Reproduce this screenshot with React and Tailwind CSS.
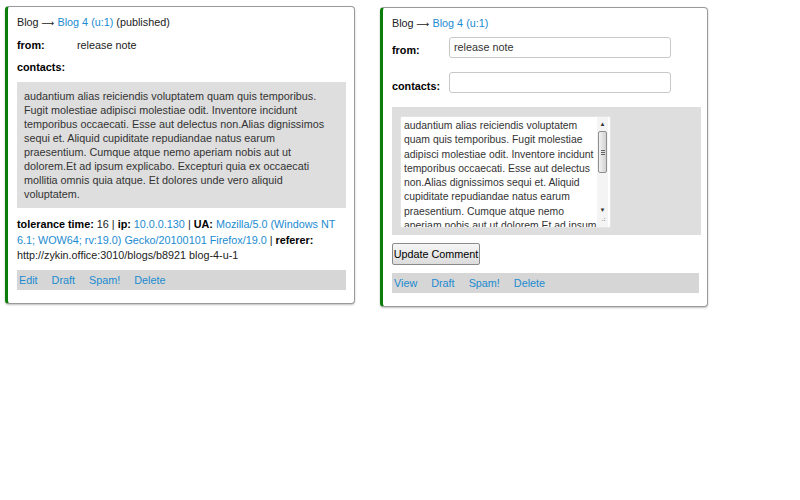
import React from "react";

const body =
  "audantium alias reiciendis voluptatem quam quis temporibus. Fugit molestiae adipisci molestiae odit. Inventore incidunt temporibus occaecati. Esse aut delectus non.Alias dignissimos sequi et. Aliquid cupiditate repudiandae natus earum praesentium. Cumque atque nemo aperiam nobis aut ut dolorem.Et ad ipsum explicabo. Excepturi quia ex occaecati mollitia omnis quia atque. Et dolores unde vero aliquid voluptatem.";

const link = "text-[#1a8bd0] hover:underline cursor-pointer";

const Card = ({ width, children }) => (
  <div
    className={`${width} bg-white border border-[#9a9a9a] border-l-[3px] border-l-[#0a7d0a] rounded-[4px] shadow-[0_1px_2px_rgba(0,0,0,0.25)] pl-[9px] pr-[8px] pt-[8px] pb-[13px]`}
  >
    {children}
  </div>
);

const Actions = ({ items }) => (
  <div className="bg-[#d6d6d6] h-[20px] flex items-center gap-[14px] pl-[2px]">
    {items.map((t) => (
      <span key={t} className={link}>
        {t}
      </span>
    ))}
  </div>
);

const Scrollbar = () => (
  <div className="w-[11px] flex flex-col items-center py-[3px] bg-[#f4f4f4]">
    <div className="text-[6px] leading-[8px] text-[#333]">▲</div>
    <div className="mt-[3px] w-[9px] h-[42px] rounded-[2px] border border-[#8e8e8e] bg-gradient-to-r from-[#f2f2f2] to-[#d2d2d2] flex items-center justify-center">
      <div className="flex flex-col gap-[1px]">
        <div className="w-[4px] h-px bg-[#666]" />
        <div className="w-[4px] h-px bg-[#666]" />
        <div className="w-[4px] h-px bg-[#666]" />
      </div>
    </div>
    <div className="flex-1" />
    <div className="text-[6px] leading-[8px] text-[#333]">▼</div>
    <div className="mt-[2px] text-[7px] leading-[8px] text-[#aaa] tracking-[-1px]">⠠⠆</div>
  </div>
);

export default function App() {
  return (
    <div
      className="min-h-[500px] w-[800px] bg-white text-[10.8px] leading-[14px] text-[#222] pl-[5px] pt-[6px] flex items-start gap-[25px]"
      style={{ fontFamily: '"Liberation Sans", Arial, sans-serif' }}
    >
      <Card width="w-[350px]">
        <div>
          Blog <span className="font-['DejaVu_Sans'] text-[9px]">⟶</span>{" "}
          <span className={link}>Blog 4 (u:1)</span> (published)
        </div>
        <div className="flex mt-[8px]">
          <div className="w-[60px] font-bold text-black">from:</div>
          <div>release note</div>
        </div>
        <div className="mt-[8px] font-bold text-black">contacts:</div>
        <div className="mt-[8px] bg-[#dedede] px-[7px] pt-[7px] pb-[7px] text-[#333]">{body}</div>
        <div className="mt-[9px] leading-[15.5px]">
          <b className="text-black">tolerance time:</b> 16 | <b className="text-black">ip:</b>{" "}
          <span className={link}>10.0.0.130</span> | <b className="text-black">UA:</b>{" "}
          <span className={link}>
            Mozilla/5.0 (Windows NT 6.1; WOW64; rv:19.0) Gecko/20100101 Firefox/19.0
          </span>{" "}
          | <b className="text-black">referer:</b> http://zykin.office:3010/blogs/b8921 blog-4-u-1
        </div>
        <div className="mt-[6px]">
          <Actions items={["Edit", "Draft", "Spam!", "Delete"]} />
        </div>
      </Card>

      <div className="pt-px">
        <Card width="w-[328px]">
          <div>
            Blog <span className="font-['DejaVu_Sans'] text-[9px]">⟶</span>{" "}
            <span className={link}>Blog 4 (u:1)</span>
          </div>
          <div className="flex items-center mt-[6px]">
            <div className="w-[57px] font-bold text-black pt-[5px]">from:</div>
            <div className="w-[222px] h-[21px] border border-[#c8c8c8] rounded-[3px] px-[4px] pt-[2px] text-[#333]">
              release note
            </div>
          </div>
          <div className="flex items-center mt-[14px]">
            <div className="w-[57px] font-bold text-black pt-[6px]">contacts:</div>
            <div className="w-[222px] h-[21px] border border-[#c8c8c8] rounded-[3px]" />
          </div>
          <div className="mt-[14px] bg-[#dedede] w-[309px] pl-[8px] pt-[9px] pb-[7px]">
            <div className="w-[211px] h-[112px] bg-white border border-[#e4e4e4] rounded-[2px] flex overflow-hidden">
              <div className="flex-1 overflow-hidden pl-[3px] pt-[2px] text-[#333] text-[10.4px] leading-[14.3px]">
                {body}
              </div>
              <div className="pr-[2px] flex">
                <Scrollbar />
              </div>
            </div>
          </div>
          <button className="mt-[8px] h-[22px] w-[88px] whitespace-nowrap border border-[#8a8a8a] rounded-[2px] bg-gradient-to-b from-[#f6f6f6] to-[#dcdcdc] text-black text-[10.8px]">
            Update Comment
          </button>
          <div className="mt-[8px]">
            <Actions items={["View", "Draft", "Spam!", "Delete"]} />
          </div>
        </Card>
      </div>
    </div>
  );
}
